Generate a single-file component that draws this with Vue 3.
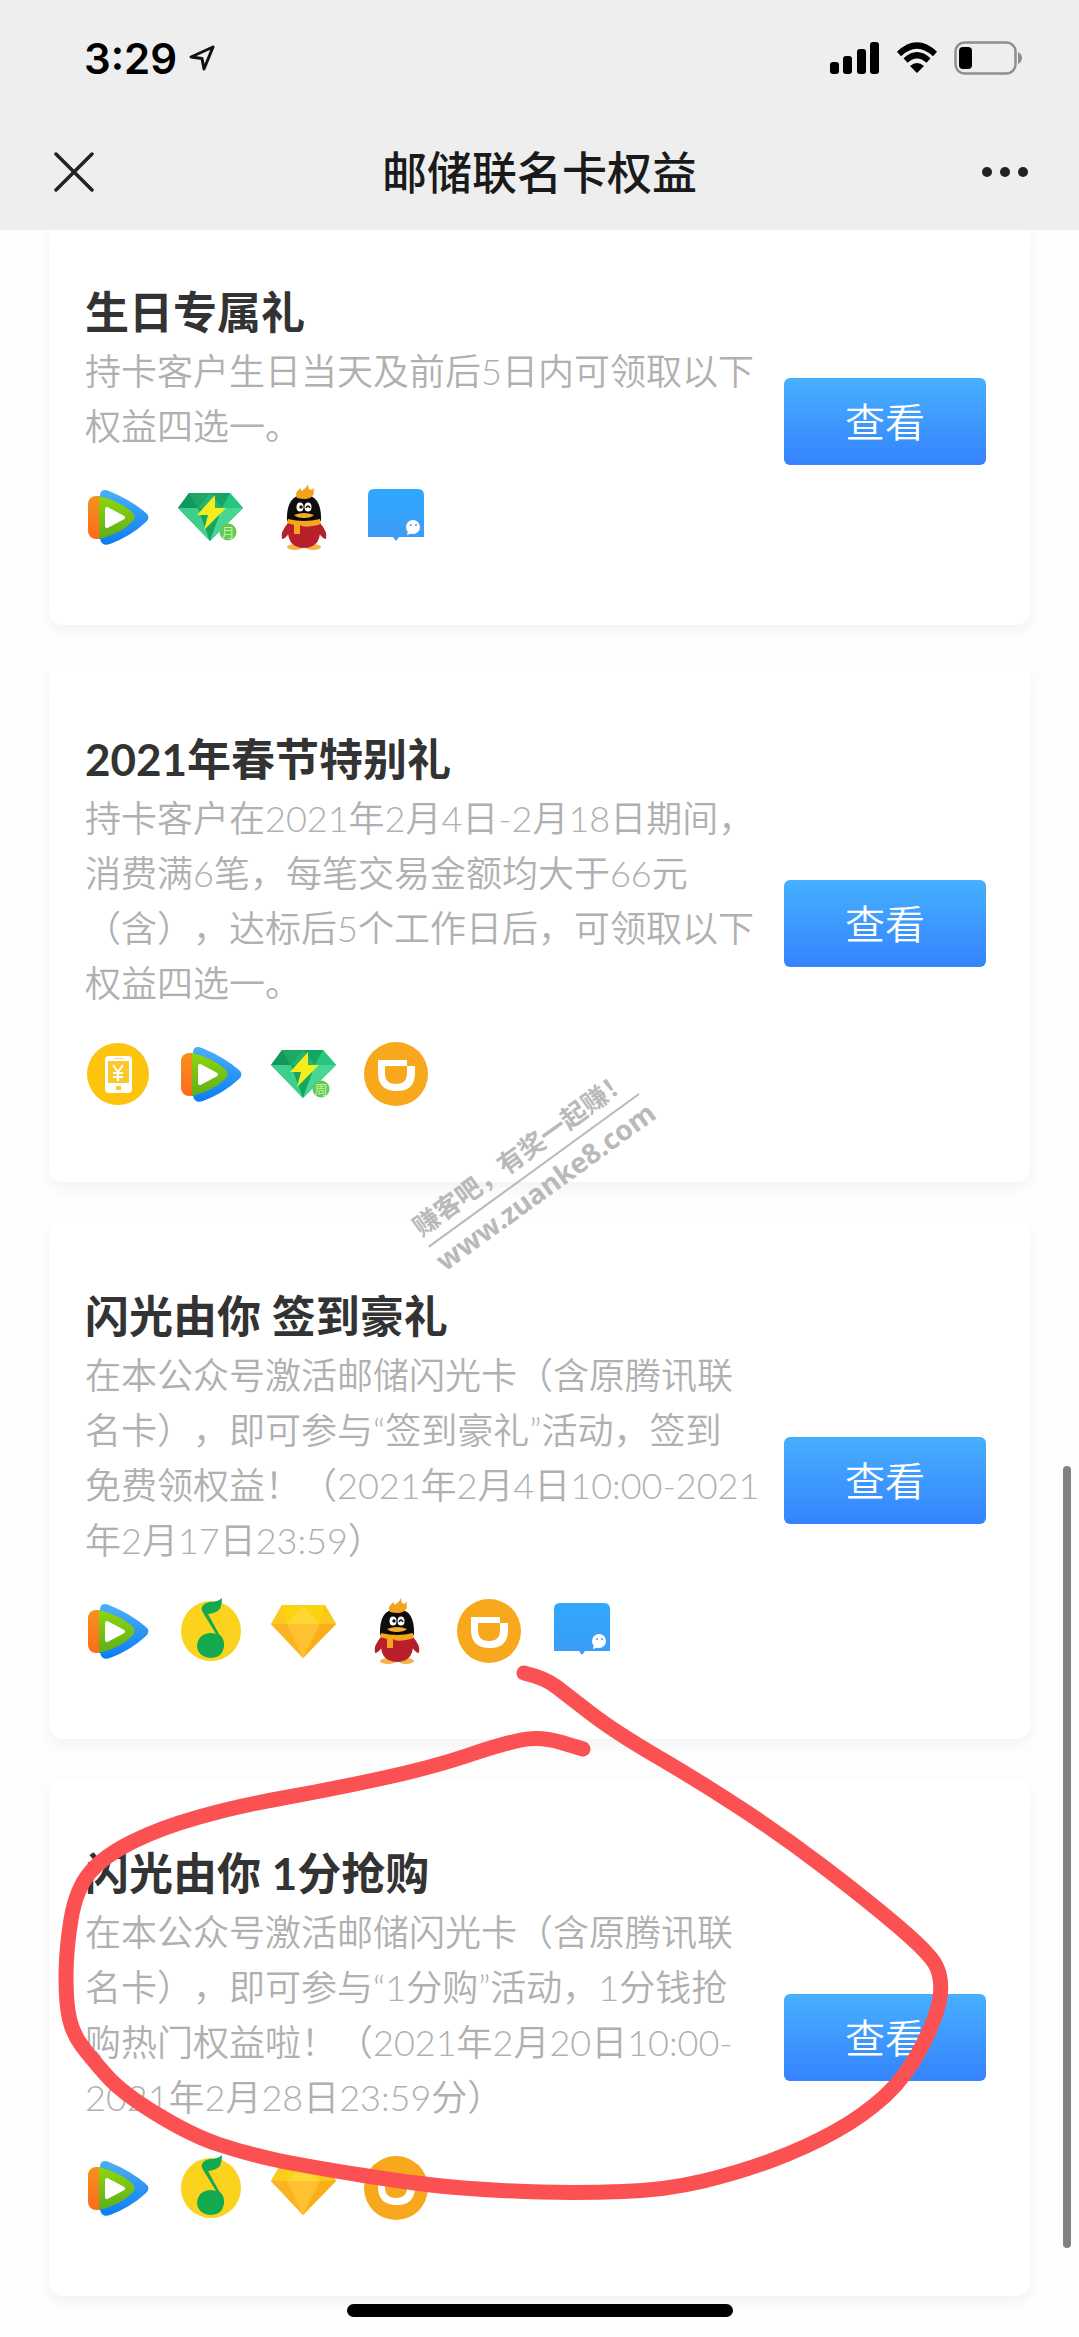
<template>
  <div class="page">
    <!-- shared icon shapes -->
    <svg class="sprite" aria-hidden="true">
      <defs>
        <linearGradient id="g-blue" x1="0" y1="0" x2="0" y2="1">
          <stop offset="0" stop-color="#4db0f5" />
          <stop offset="1" stop-color="#0b7cf5" />
        </linearGradient>
        <linearGradient id="g-orange" x1="0" y1="0" x2="0" y2="1">
          <stop offset="0" stop-color="#f5921e" />
          <stop offset="1" stop-color="#ff6a1c" />
        </linearGradient>
        <linearGradient id="g-green" x1="0" y1="0" x2="0" y2="1">
          <stop offset="0" stop-color="#8fd60a" />
          <stop offset="1" stop-color="#5fae1c" />
        </linearGradient>
        <linearGradient id="g-msg" x1="0" y1="0" x2="0" y2="1">
          <stop offset="0" stop-color="#2fa8ff" />
          <stop offset="1" stop-color="#3c9cf5" />
        </linearGradient>

        <symbol id="i-video" viewBox="0 0 66 66">
          <rect x="3" y="12" width="22" height="43" rx="8" fill="url(#g-orange)" />
          <path d="M15 11Q16 4 24 7Q46 16 61 29Q66 33 61 38Q46 52 25 60Q17 63 15 55Z" fill="url(#g-blue)" />
          <path d="M14 12Q34 17 47 28Q52 33 47 38Q35 50 14 55Z" fill="url(#g-green)" />
          <path d="M22 25L38 33.500L22 42Z" fill="#fff" stroke="#fff" stroke-width="4" stroke-linejoin="round" />
        </symbol>

        <symbol id="i-green" viewBox="0 0 66 66">
          <path d="M11 9H52L65 24L32 57L0 24Z" fill="#22b573" />
          <path d="M11 9L20 24H0Z" fill="#12985a" />
          <path d="M11 9H32L20 24Z" fill="#1ea767" />
          <path d="M32 9H52L44 24Z" fill="#15a563" />
          <path d="M52 9L65 24H44Z" fill="#25c680" />
          <path d="M0 24H20L32 57Z" fill="#3dcf8e" />
          <path d="M20 24H44L32 57Z" fill="#17a563" />
          <path d="M44 24H65L32 57Z" fill="#45d793" />
          <path d="M37 11L19 31H30L26 46L48 24H37Z" fill="#f6ee1c" />
          <circle cx="50" cy="48" r="8.500" fill="#5fc95a" />
        </symbol>

        <symbol id="i-qq" viewBox="0 0 66 66">
          <ellipse cx="24" cy="63" rx="8" ry="3" fill="#f5b24a" />
          <ellipse cx="42" cy="63" rx="8" ry="3" fill="#f5b24a" />
          <path d="M17 39Q9 48 11 55Q15 55 19 47ZM49 39Q57 48 55 55Q51 55 47 47Z" fill="#b3202c" />
          <path d="M17 38H49Q52 64 33 64Q14 64 17 38Z" fill="#b81f2b" />
          <path d="M16 37Q15 11 33 11Q51 11 50 37Z" fill="#0c0c0c" />
          <path d="M26 14Q23 8 30 4V7Q35 5 37 0Q37 4 39 6Q42 5 43 4Q42 7 43 9Q42 14 35 15Q30 15 26 14Z" fill="#f2a21d" />
          <ellipse cx="29" cy="23" rx="3.500" ry="4.500" fill="#fff" />
          <ellipse cx="37" cy="23" rx="3.500" ry="4.500" fill="#fff" />
          <circle cx="30" cy="23" r="1.700" fill="#111" />
          <path d="M35 24Q37 20 39 24" fill="none" stroke="#111" stroke-width="1.500" />
          <path d="M23 31Q33 27 43 31Q40 34 33 34Q26 34 23 31Z" fill="#f5ab2b" />
          <path d="M17 35Q33 39 49 35L50 40Q33 45 29 41V50H23V41L16 39Z" fill="#f4a71e" />
        </symbol>

        <symbol id="i-msg" viewBox="0 0 66 66">
          <path d="M4 53V11Q4 5 10 5H54Q60 5 60 11V53H35L32 57L29 53Z" fill="url(#g-msg)" />
          <circle cx="49" cy="43" r="7" fill="#fff" />
          <path d="M44 46L43 51L49 49Z" fill="#fff" />
          <circle cx="47" cy="41" r="1" fill="#4a9be0" />
          <circle cx="52" cy="41" r="1" fill="#4a9be0" />
        </symbol>

        <symbol id="i-phone" viewBox="0 0 66 66">
          <circle cx="33" cy="33" r="31" fill="#fcc40d" />
          <rect x="20" y="15" width="27" height="37" rx="4" fill="#fff" />
          <rect x="23" y="20" width="21" height="22" fill="#fbc92a" />
          <path d="M28 24L33 31L38 24M33 31V40M28 32H38M28 36H38" fill="none" stroke="#fff" stroke-width="2" />
          <rect x="31" y="45" width="5" height="4" rx="1" fill="#fbc92a" />
          <rect x="29" y="17" width="9" height="1" fill="#fbd560" />
        </symbol>

        <symbol id="i-didi" viewBox="0 0 66 66">
          <circle cx="32" cy="33" r="32" fill="#f8a81c" />
          <path d="M14 19H43V25H51V32Q51 50 33 50Q14 50 14 32ZM21 25V32Q21 43 32 43Q43 43 43 32V25Z" fill="#fff" fill-rule="evenodd" />
        </symbol>

        <symbol id="i-music" viewBox="0 0 66 66">
          <circle cx="33" cy="33" r="30" fill="#fbd31e" />
          <path d="M44 0Q44 12 38 14Q33 16 30 16L41 36Q47 41 46 49Q44 60 33 60Q20 59 19 48Q20 36 32 35Q35 35 38 36L24 13Q22 6 32 4Q40 4 44 0Z" fill="#12a94f" />
        </symbol>

        <symbol id="i-gold" viewBox="0 0 66 66">
          <path d="M11 7H54L65 26L32 60L0 26Z" fill="#fbbd22" />
          <path d="M11 7L16 26H0Z" fill="#fccb20" />
          <path d="M11 7H32L16 26Z" fill="#fcd30f" />
          <path d="M32 7L49 26H16Z" fill="#fdd835" />
          <path d="M32 7H54L49 26Z" fill="#fcd30f" />
          <path d="M54 7L65 26H49Z" fill="#fcc81c" />
          <path d="M0 26H16L32 60Z" fill="#fbb321" />
          <path d="M16 26H49L32 60Z" fill="#fdc132" />
          <path d="M49 26H65L32 60Z" fill="#fbae17" />
        </symbol>
      </defs>
    </svg>

    <header class="header">
      <div class="status">
        <div class="clock">
          <span>3:29</span>
          <svg class="arrow" viewBox="0 0 28 28">
            <path d="M25 3L3 13L14 14.500L16 25Z" fill="none" stroke="#111" stroke-width="3" stroke-linejoin="round" />
          </svg>
        </div>
        <div class="signals">
          <svg class="bars" viewBox="0 0 50 32">
            <rect x="0" y="20" width="9" height="12" rx="3" />
            <rect x="13" y="14" width="9" height="18" rx="3" />
            <rect x="27" y="7" width="9" height="25" rx="3" />
            <rect x="40" y="0" width="9" height="32" rx="3" />
          </svg>
          <svg class="wifi" viewBox="0 0 42 32">
            <path d="M3 12Q21 -5 39 12" fill="none" stroke="#000" stroke-width="6" />
            <path d="M9.500 18.500Q21 8 32.500 18.500" fill="none" stroke="#000" stroke-width="6" />
            <path d="M14 24Q21 18 28 24L21 31Z" />
          </svg>
          <svg class="battery" viewBox="0 0 68 34">
            <rect x="1.500" y="1.500" width="60" height="31" rx="9" fill="none" stroke="#8e8e8e" stroke-width="2.500" />
            <rect x="5" y="6" width="13" height="22" rx="4" />
            <path d="M64 11Q68 13 68 17Q68 21 64 23Z" fill="#8e8e8e" />
          </svg>
        </div>
      </div>
      <nav class="nav">
        <button class="nav-btn" type="button" aria-label="关闭">
          <svg class="close" viewBox="0 0 40 40">
            <path d="M2 2L38 38M38 2L2 38" stroke="#222" stroke-width="3.500" stroke-linecap="round" />
          </svg>
        </button>
        <h1 class="nav-title">邮储联名卡权益</h1>
        <button class="nav-btn" type="button" aria-label="更多">
          <svg class="more" viewBox="0 0 48 12">
            <circle cx="6" cy="6" r="5" />
            <circle cx="24" cy="6" r="5" />
            <circle cx="42" cy="6" r="5" />
          </svg>
        </button>
      </nav>
    </header>

    <main class="list">
      <section v-for="card in cards" :key="card.title" class="card">
        <div class="info">
          <h2 class="title">{{ card.title }}</h2>
          <p class="desc">{{ card.desc.join('\n') }}</p>
          <div class="icons">
            <svg v-for="icon in card.icons" :key="icon" class="icon" viewBox="0 0 66 66">
              <use :href="'#i-' + icon" />
              <text v-if="icon === 'green'" class="badge" x="50" y="53">{{ card.badge }}</text>
            </svg>
          </div>
        </div>
        <button class="view" type="button">查看</button>
      </section>
    </main>

    <div class="watermark">
      <span class="mark-cn">赚客吧，有奖一起赚！</span>
      <span class="mark-url">www.zuanke8.com</span>
    </div>

    <svg class="scribble" viewBox="0 0 1079 2337" aria-hidden="true">
      <path :d="scribble" />
    </svg>

    <div class="scrollbar"></div>
    <div class="home"></div>
  </div>
</template>

<script setup>
const cards = [
  {
    title: '生日专属礼',
    desc: ['持卡客户生日当天及前后5日内可领取以下', '权益四选一。'],
    icons: ['video', 'green', 'qq', 'msg'],
    badge: '月'
  },
  {
    title: '2021年春节特别礼',
    desc: [
      '持卡客户在2021年2月4日-2月18日期间，',
      '消费满6笔，每笔交易金额均大于66元',
      '（含），达标后5个工作日后，可领取以下',
      '权益四选一。'
    ],
    icons: ['phone', 'video', 'green', 'didi'],
    badge: '周'
  },
  {
    title: '闪光由你 签到豪礼',
    desc: [
      '在本公众号激活邮储闪光卡（含原腾讯联',
      '名卡），即可参与“签到豪礼”活动，签到',
      '免费领权益！（2021年2月4日10:00-2021',
      '年2月17日23:59）'
    ],
    icons: ['video', 'music', 'gold', 'qq', 'didi', 'msg']
  },
  {
    title: '闪光由你 1分抢购',
    desc: [
      '在本公众号激活邮储闪光卡（含原腾讯联',
      '名卡），即可参与“1分购”活动，1分钱抢',
      '购热门权益啦！（2021年2月20日10:00-',
      '2021年2月28日23:59分）'
    ],
    icons: ['video', 'music', 'gold', 'didi']
  }
]

const points = [
  [524, 1673], [545, 1678], [567, 1695], [615, 1732], [699, 1781], [783, 1836],
  [867, 1900], [927, 1951], [942, 1975], [939, 2012], [907, 2076], [863, 2116],
  [807, 2147], [741, 2172], [666, 2190], [580, 2193], [502, 2191], [424, 2185],
  [304, 2166], [244, 2153], [191, 2135], [122, 2093], [91, 2058], [73, 2034],
  [66, 2004], [66, 1950], [76, 1889], [104, 1856], [160, 1828], [238, 1806],
  [328, 1790], [430, 1768], [502, 1744], [540, 1736], [583, 1749]
]

// quadratic curves through the midpoints
function smooth(list) {
  let d = `M${list[0]}`
  for (let i = 1; i < list.length - 1; i++) {
    const [x, y] = list[i]
    const [nx, ny] = list[i + 1]
    d += `Q${x} ${y} ${(x + nx) / 2} ${(y + ny) / 2}`
  }
  return d + `L${list[list.length - 1]}`
}

const scribble = smooth(points)
</script>

<style>
body {
  margin: 0;
  background: #fefefe;
}
</style>

<style scoped>
.page {
  position: relative;
  overflow: hidden;
  padding-bottom: 42px;
  background: #fefefe;
  font-family: Lato, "Noto Sans CJK SC", sans-serif;
  text-spacing-trim: space-all;
}

.sprite {
  position: absolute;
  width: 0;
  height: 0;
}

button {
  border: 0;
  padding: 0;
  font-family: inherit;
}

.header {
  position: relative;
  z-index: 2;
  background: #eee;
}

.status {
  display: flex;
  align-items: center;
  justify-content: space-between;
  height: 116px;
  padding: 0 57px 0 84px;
}

.clock {
  display: flex;
  align-items: center;
  gap: 11px;
  color: #000;
  font-family: Inter, sans-serif;
  font-size: 42px;
  font-weight: 600;
}

.arrow {
  width: 28px;
  height: 28px;
}

.signals {
  display: flex;
  align-items: center;
  gap: 16px;
}

.bars {
  width: 50px;
  height: 32px;
}

.wifi {
  width: 42px;
  height: 32px;
}

.battery {
  width: 68px;
  height: 34px;
}

.nav {
  display: flex;
  align-items: center;
  justify-content: space-between;
  height: 112px;
  padding: 0 48px 2px;
}

.nav-btn {
  display: flex;
  justify-content: center;
  width: 52px;
  background: none;
}

.close {
  width: 40px;
  height: 40px;
}

.more {
  width: 48px;
  height: 12px;
  fill: #222;
}

.nav-title {
  margin: 0;
  padding-bottom: 4px;
  color: #1a1a1a;
  font-size: 45px;
  font-weight: 500;
}

.list {
  display: flex;
  flex-direction: column;
  gap: 40px;
  margin-top: -12px;
  padding: 0 49px;
}

.card {
  display: flex;
  align-items: center;
  justify-content: space-between;
  padding: 0 44px 0 36px;
  border-radius: 14px;
  background: #fff;
  box-shadow: 0 6px 16px rgba(0, 0, 0, 0.05);
}

.info {
  padding: 62px 0 75px;
}

.title {
  margin: 0;
  color: #333;
  font-size: 44px;
  font-weight: 700;
  line-height: 64px;
}

.desc {
  margin: 0;
  color: #b0b0b0;
  font-size: 36px;
  font-weight: 350;
  line-height: 55px;
  white-space: pre;
}

.icons {
  display: flex;
  gap: 27px;
  margin-top: 30px;
}

.icon {
  width: 66px;
  height: 66px;
  overflow: visible;
}

.badge {
  fill: #c9f29a;
  font-size: 13px;
  text-anchor: middle;
}

.view {
  flex: none;
  width: 202px;
  height: 87px;
  padding-bottom: 4px;
  border-radius: 6px;
  background: linear-gradient(#46b0ff, #3583fd);
  color: #fff;
  font-size: 40px;
  font-weight: 350;
}

.watermark {
  position: absolute;
  top: 1128px;
  left: 402px;
  display: flex;
  flex-direction: column;
  align-items: center;
  width: 260px;
  color: #b9b9b9;
  font-weight: 700;
  white-space: nowrap;
  transform: rotate(-36deg);
}

.mark-cn {
  border-bottom: 2px solid #b9b9b9;
  font-size: 26px;
  line-height: 42px;
}

.mark-url {
  font-family: "Noto Sans", sans-serif;
  font-size: 28px;
  line-height: 36px;
}

.scribble {
  position: absolute;
  top: 0;
  left: 0;
  width: 100%;
  pointer-events: none;
}

.scribble path {
  fill: none;
  stroke: #fc5152;
  stroke-width: 15;
  stroke-linecap: round;
  stroke-linejoin: round;
}

.scrollbar {
  position: absolute;
  top: 1466px;
  right: 8px;
  bottom: 90px;
  width: 8px;
  border-radius: 4px;
  background: #808080;
}

.home {
  position: absolute;
  bottom: 21px;
  left: 50%;
  width: 386px;
  height: 13px;
  margin-left: -193px;
  border-radius: 7px;
  background: #000;
}
</style>
